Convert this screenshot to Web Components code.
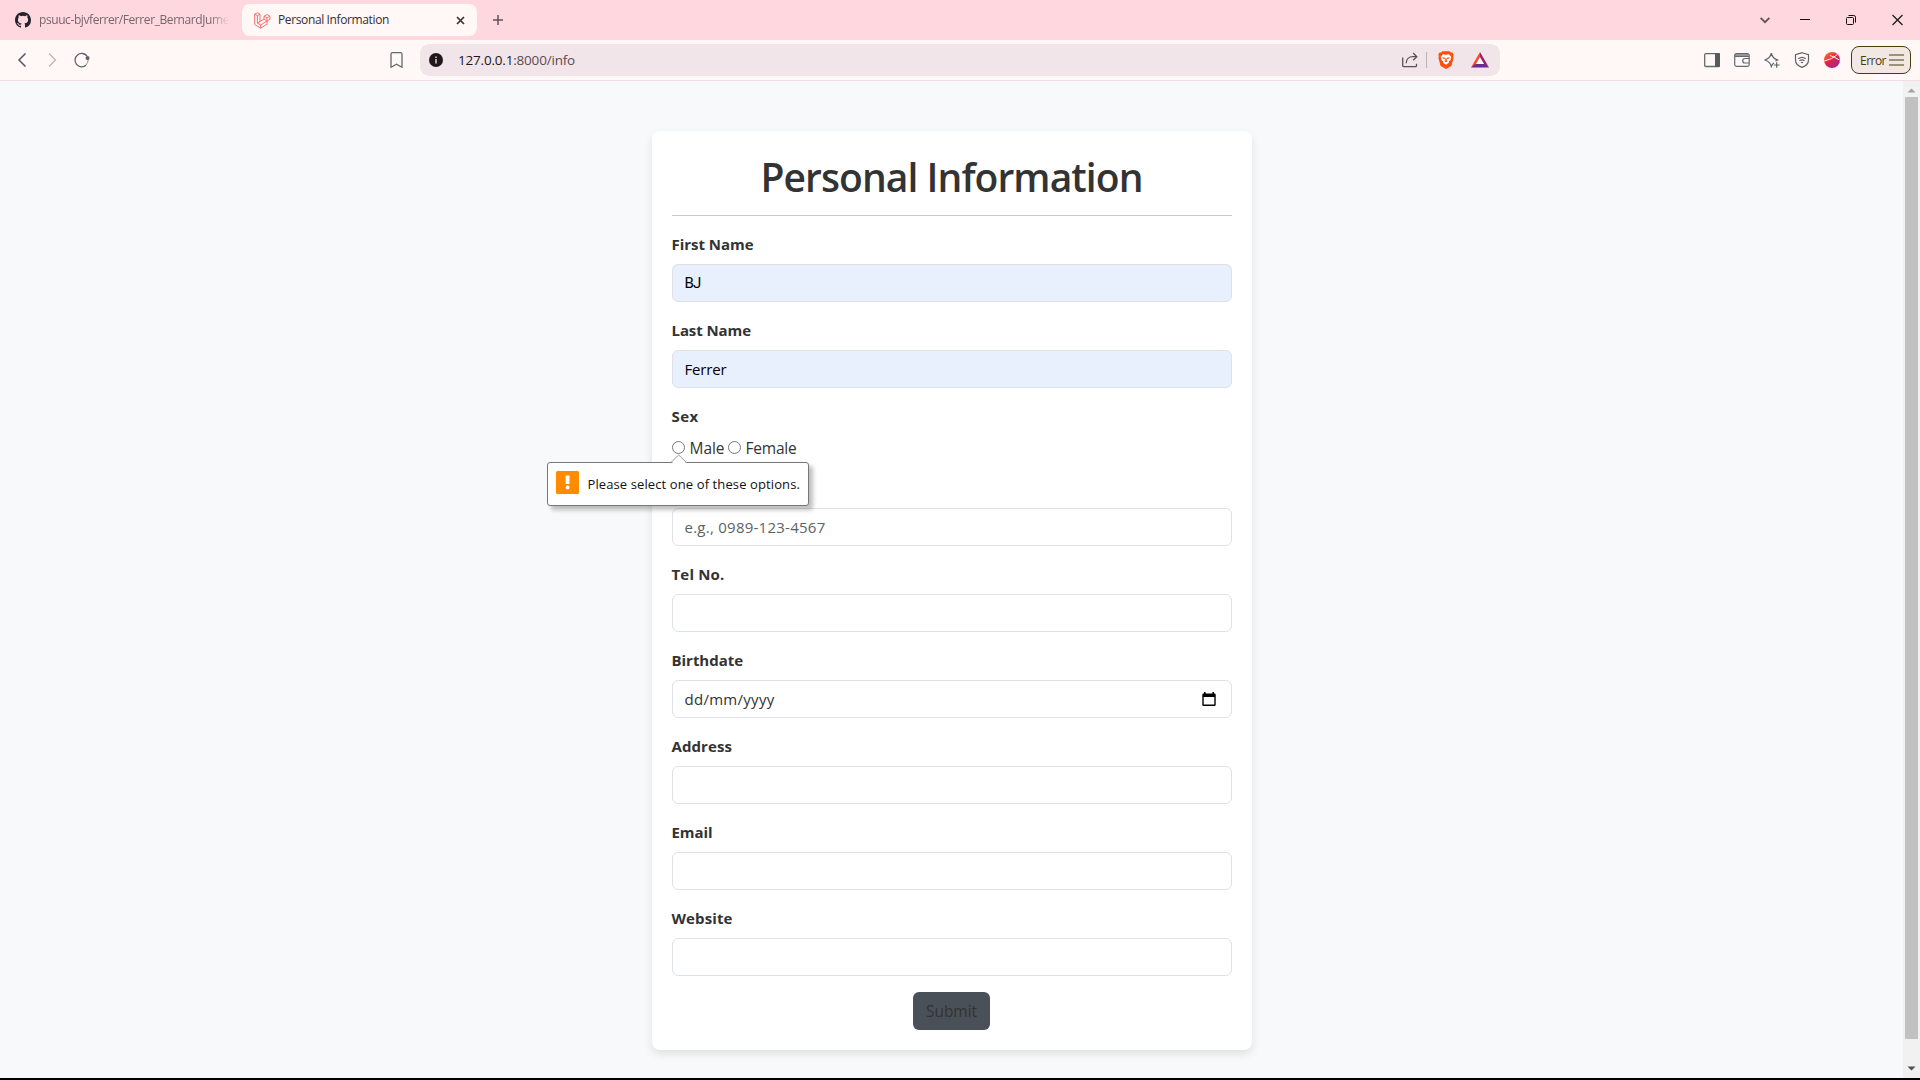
<!DOCTYPE html>
<html lang="en">
<head>
<meta charset="utf-8">
<title>Personal Information</title>
<style>
html,body{margin:0;height:100%;overflow:hidden}
body{font-family:"Open Sans","Noto Sans",sans-serif;color:#333;background:#f8f9fb}
</style>
</head>
<body>
<browser-window></browser-window>
<script>
const define = (name, html, extra) => {
  const t = document.createElement('template');
  t.innerHTML = html;
  customElements.define(name, class extends HTMLElement {
    constructor() {
      super();
      this.attachShadow({mode: 'open'}).append(t.content.cloneNode(true));
    }
    connectedCallback() { if (extra) extra(this, this.shadowRoot); }
  });
};

/* A run of text whose tracking is adjusted so that it spans the width in its "w" attribute. */
const runs = new Set();
define('text-run', `<style>:host{display:inline-block;white-space:nowrap;flex:none}</style><slot></slot>`, el => runs.add(el));

define('tab-strip', `<style>
:host{display:flex;height:40px;background:#ffd7df;align-items:center;box-sizing:border-box}
svg{display:block;flex:none}
.old{display:flex;align-items:center;width:214px;margin-left:15px;gap:8px;height:32px;font-size:12px;color:#75676b}
.clip{overflow:hidden;flex:1;-webkit-mask-image:linear-gradient(90deg,#000 90%,transparent)}
.tab{display:flex;align-items:center;box-sizing:border-box;margin-left:13px;width:235px;height:32px;border-radius:8px;background:#fff8f7;padding:0 12px 0 12px;font-size:12px;color:#342f31}
.tab text-run{margin-left:7px}
text-run{position:relative;top:-.5px}
.x{margin-left:auto}
.plus{margin-left:16px}
.wc{margin-left:auto;display:flex;gap:30px;margin-right:17px}
</style>
<div class="old">
<svg width="16" height="16" viewBox="0 0 16 16"><path fill="#24222a" d="M8 0C3.58 0 0 3.58 0 8c0 3.54 2.29 6.53 5.47 7.59.4.07.55-.17.55-.38 0-.19-.01-.82-.01-1.49-2.01.37-2.53-.49-2.69-.94-.09-.23-.48-.94-.82-1.13-.28-.15-.68-.52-.01-.53.63-.01 1.08.58 1.23.82.72 1.21 1.87.87 2.33.66.07-.52.28-.87.51-1.07-1.78-.2-3.64-.89-3.64-3.95 0-.87.31-1.59.82-2.15-.08-.2-.36-1.02.08-2.12 0 0 .67-.21 2.2.82a7.6 7.6 0 0 1 4 0c1.53-1.04 2.2-.82 2.2-.82.44 1.1.16 1.92.08 2.12.51.56.82 1.27.82 2.15 0 3.07-1.87 3.75-3.65 3.95.29.25.54.73.54 1.48 0 1.07-.01 1.93-.01 2.2 0 .21.15.46.55.38A8.01 8.01 0 0 0 16 8c0-4.42-3.58-8-8-8z"/></svg>
<div class="clip"><text-run w="190">psuuc-bjvferrer/Ferrer_BernardJume</text-run></div>
</div>
<div class="tab">
<svg width="17" height="17" viewBox="0 0 17 17" fill="none" stroke="#f4645f" stroke-width=".9" stroke-linejoin="round"><path d="M.7 2.2 3.3.8 6 2.2v7.2l4-2.3V4.2l3-1.7 2.9 1.7v3.2L13 9v3.2l-6.3 3.9L.7 12.6zM.7 2.2l2.7 1.6L6 2.2M3.4 3.8v7.3l3.3 1.9 6.3-4M6.7 13v3.1M3.4 11.1 6 9.4M10 4.2l3 1.7 2.9-1.7M13 5.9V9l-3-1.9"/></svg>
<text-run w="111">Personal Information</text-run>
<svg class="x" width="9" height="9" viewBox="0 0 9 9" stroke="#38343a" stroke-width="1.7"><path d="M1 1l7 7M8 1 1 8"/></svg>
</div>
<svg class="plus" width="10" height="10" viewBox="0 0 10 10" stroke="#5e5559" stroke-width="1.5"><path d="M5 0v10M0 5h10"/></svg>
<div class="wc">
<svg width="10" height="12" viewBox="0 0 10 12" fill="none" stroke="#5c5459" stroke-width="1.8"><path d="M.6 3.8 5 8.2l4.4-4.4"/></svg>
<svg style="margin-right:6px" width="10" height="12" viewBox="0 0 10 12" stroke="#111" stroke-width="1"><path d="M0 5.5h10"/></svg>
<svg style="margin-right:6px" width="10" height="12" viewBox="0 0 10 12" fill="none" stroke="#111"><rect x=".5" y="3.500" width="7" height="7" rx="1"/><path d="M2.500 1.500h5.300a1.700 1.700 0 0 1 1.700 1.700v5.300"/></svg>
<svg width="11" height="12" viewBox="0 0 11 12" stroke="#111" stroke-width="1.100"><path d="M.5 1l10 10M10.500 1l-10 10"/></svg>
</div>`);

define('address-bar', `<style>
:host{display:flex;align-items:center;height:32px;width:1080px;box-sizing:border-box;border-radius:9px;background:#f2e5ea;padding:0 11px 0 9px;color:#2b1e22;font-size:13.5px}
svg{display:block;flex:none}
text-run{margin-left:15px}
.host{color:#21171b}.rest{color:#594b51}
.end{margin-left:auto;display:flex;align-items:center}
i{width:1px;height:16px;background:#beb1b7;margin:0 11px 0 8px}
</style>
<svg width="14" height="14" viewBox="0 0 14 14"><circle cx="7" cy="7" r="7" fill="#21171b"/><path stroke="#d9ced2" stroke-width="1.5" d="M7 6.1v4.400M7 3.500v1.500"/></svg>
<text-run w="117"><span class="host">127.0.0.1</span><span class="rest">:8000/info</span></text-run>
<div class="end">
<svg width="16" height="16" viewBox="0 0 16 16" fill="none" stroke="#5b5056" stroke-width="1.3"><path d="M.7 5.500v8q0 1.200 1.200 1.200h11.400q1.200 0 1.200-1.200v-1.800M4.200 11.200C4.200 7 7 4.700 11 4.700h3.500M11.200 1l3.600 3.700-3.600 3.600"/></svg>
<i></i>
<svg width="16" height="18" viewBox="0 0 16 18"><path fill="#fb4f0b" d="M4.300.2h7.400l1.200 1.400 1.600-.1 1.200 2.200-.6 1.600.5 1.500-1.900 7.100q-.3 1-1.200 1.600L8 18l-4.500-2.500q-.9-.6-1.200-1.600L.4 6.800l.5-1.500-.6-1.600L1.500 1.500l1.600.1z"/><path fill="#fff" d="M5 3.200 8 3.700l3-.5 2.300 2.900-.6 1.500.2 1-2.300 2.200.3.900L8 13.700l-2.900-2 .3-.9L3.100 8.600l.2-1-.6-1.500z"/><path fill="#fb4f0b" d="M4.500 6.200 7 6.800 6.800 8 4.800 7.400zM11.500 6.200 9 6.800 9.200 8l2-.6zM7.500 7h1l.3 2.500.9.600L8 11.200l-1.700-1.100.9-.6z"/></svg>
<svg style="margin-left:17px" width="18" height="16" viewBox="0 0 18 16"><path fill="#fff" d="M9 5 13.500 12.500h-9z"/><path fill="#ff4724" d="M9 0v5L4.600 12.400 0 15.500z"/><path fill="#9e1f63" d="M9 0l9 15.500-4.600-3.100L9 5z"/><path fill="#662d91" d="M0 15.500l4.600-3.600h8.800l4.600 3.600z"/></svg>
</div>`);

define('nav-bar', `<style>
:host{display:flex;align-items:center;height:41px;box-sizing:border-box;border-bottom:1px solid #f4dce0;background:#fff8f7;padding:0 9px 0 17px}
svg{display:block;flex:none}
address-bar{margin-left:17px}
.ext{margin-left:auto;display:flex;align-items:center;gap:14px}
.menu{display:flex;align-items:center;justify-content:space-between;box-sizing:border-box;width:60px;height:28px;border:1.5px solid #4b3a0e;border-radius:8px;background:#f1e8e3;color:#4b3a0e;font-size:12px;padding:0 5px 0 8px;margin-left:-3px}
</style>
<svg width="10" height="14" viewBox="0 0 10 14" fill="none" stroke="#53595e" stroke-width="1.5"><path d="M8.500.500 2 7l6.500 6.500"/></svg>
<svg style="margin-left:21px" width="9" height="14" viewBox="0 0 9 14" fill="none" stroke="#b9b5b7" stroke-width="1.300"><path d="M1 .5 7.500 7 1 13.500"/></svg>
<svg style="margin-left:17px" width="16" height="16" viewBox="0 0 16 16" fill="none" stroke="#5d6267" stroke-width="1.300"><path d="M13 4A6.700 6.700 0 1 0 12 13.300"/><circle cx="13.500" cy="6" r="2" fill="#5d6267" stroke="none"/><path d="M14.300 7q0 3.800-2.700 6.600" stroke-width=".7"/></svg>
<svg style="margin-left:300px" width="13" height="16" viewBox="0 0 13 16" fill="none" stroke="#65696e" stroke-width="1.300"><path d="M2.500.700h8q1.500 0 1.500 1.500v13l-5.500-3-5.500 3v-13Q1 .700 2.500.700z"/></svg>
<address-bar></address-bar>
<div class="ext">
<svg width="16" height="16" viewBox="0 0 16 16"><rect x=".7" y="1.700" width="14.600" height="12.800" rx="1" fill="none" stroke="#666a6f" stroke-width="1.300"/><path fill="#555a60" d="M11 1h4q1 0 1 1v12q0 1-1 1h-4z"/></svg>
<svg width="16" height="16" viewBox="0 0 16 16" fill="none" stroke="#65696e" stroke-width="1.200"><path fill="#a5a4a6" stroke="none" d="M1 2h13.500v2.500H1z"/><path d="M15.200 6V3.500q0-1.800-1.800-1.800H2.500Q.7 1.700.7 3.500v9q0 1.800 1.800 1.800h10.900q1.800 0 1.800-1.800v-7q0-1.200-1.500-1.200H1M15 6.500h-4a2.200 2.200 0 0 0 0 4.500h4"/></svg>
<svg width="16" height="16" viewBox="0 0 16 16" fill="none" stroke="#5d6267" stroke-width="1.200"><path d="M10 11q-1.800 1.200-2.700 3.500-.9-4.500-6.300-6.500 5.300-1.800 6.300-6.800 1 5.100 6.300 6.800L11.500 9M12.700 10.200v5.600M10 13h5.600"/></svg>
<svg width="16" height="16" viewBox="0 0 16 16" fill="none" stroke="#5d6267" stroke-width="1.200"><path d="M8 .7l6.500 2v5.200q0 5-6.500 7.500-6.500-2.500-6.500-7.500V2.700zM4.300 6.700Q8 3.900 11.700 6.700M5.500 8.800q2.500-1.900 5 0M7 10.700q1-.8 2 0"/></svg>
<svg width="16" height="16" viewBox="0 0 16 16"><defs><linearGradient id="g" x1="0" y1="0" x2=".8" y2="1"><stop offset="0" stop-color="#ff8a2f"/><stop offset=".5" stop-color="#e42344"/><stop offset="1" stop-color="#9b2897"/></linearGradient></defs><circle cx="8" cy="8" r="8" fill="url(#g)"/><path d="M.3 9Q8 7.500 13.500 2.500M6 3.500q4 1.500 9.500 4.500" fill="none" stroke="#fff4ee" stroke-width="1"/></svg>
<div class="menu"><text-run w="26">Error</text-run><svg width="16" height="12" viewBox="0 0 16 12" stroke="#4b3a0e" stroke-width="1.200"><path d="M0 1h15M0 6h15M0 11h15"/></svg></div>
</div>`);

define('form-field', `<style>
:host{display:flex;flex-direction:column;gap:8px;margin-bottom:16px}
.label{height:24px;line-height:24px;font-weight:700;font-size:15px;color:#333}
.box{display:flex;align-items:center;justify-content:space-between;height:38px;box-sizing:border-box;border:1px solid #dee2e6;border-radius:6px;background:#fff;padding:0 15px 0 12px;font-size:15px;line-height:24px}
:host([filled]) .box{background:#e8f0fe;color:#000}
</style><div class="label"><slot name="label"></slot></div><div class="box"><slot></slot></div>`);

define('radio-option', `<style>
:host{display:flex;align-items:center;gap:5px;font-size:15.5px;line-height:24px}
i{width:13px;height:13px;box-sizing:border-box;border:1px solid #767676;border-radius:50%;background:#fff;flex:none;margin-top:-1px}
</style><i></i><slot></slot>`);

define('validation-bubble', `<style>
:host{position:absolute;left:-125px;top:26px;z-index:2;display:flex;align-items:center;gap:9px;box-sizing:border-box;width:262px;height:44px;border:1px solid #777;border-radius:3px;background:#fff;box-shadow:4px 4px 4px rgba(0,0,0,.25);padding:0 8px;color:#111;font-size:13px}
.arrow{position:absolute;left:122px;top:-9px}
.icon{margin-top:-3px;flex:none}
svg{display:block}
</style>
<svg class="arrow" width="18" height="10" viewBox="0 0 18 10"><path fill="#fff" d="M1 10 9 1.500 17 10z"/><path fill="none" stroke="#999" d="M.5 8.900 8.700 1l8.200 7.900"/></svg>
<svg class="icon" width="23" height="23" viewBox="0 0 23 23"><rect width="23" height="23" rx="1.500" fill="#ff8c00"/><path fill="#fff" d="M9.700 4.500h3.800v8.500H9.700z"/><circle cx="11.600" cy="16.400" r="1.900" fill="#fff"/></svg>
<text-run w="212.500">Please select one of these options.</text-run>`);

define('info-card', `<style>
:host{display:block;box-sizing:border-box;width:600px;height:919px;margin:50px auto 0;padding:20px;border-radius:8px;background:#fff;box-shadow:0 4px 8px rgba(0,0,0,.1)}
h1{margin:0;height:48px;line-height:51px;text-align:center;font-size:39px;font-weight:550;color:#333}
hr{margin:16px 0;border:0;height:1px;background:#c9c9c9}
.sex{margin-bottom:16px}
.label{height:24px;line-height:24px;font-weight:700;font-size:15px;margin-bottom:8px}
.radios{display:flex;height:24px;gap:3px;position:relative}
.initials{font-family:Roboto,"Open Sans",sans-serif}
.ph{color:#5d6267}
.submit{display:flex;align-items:center;justify-content:center;margin:0 auto;width:77px;height:38px;border-radius:6px;background:#495057;color:#333;font-size:15.5px}
.sex + form-field{margin-top:0}
</style>
<h1><text-run w="382">Personal Information</text-run></h1>
<hr>
<form-field filled><text-run slot="label" w="82">First Name</text-run><text-run class="initials" w="16">BJ</text-run></form-field>
<form-field filled><text-run slot="label" w="79.500">Last Name</text-run><text-run w="42">Ferrer</text-run></form-field>
<div class="sex"><div class="label"><text-run w="27">Sex</text-run></div>
<div class="radios"><radio-option><text-run w="35">Male</text-run></radio-option><radio-option><text-run w="51">Female</text-run></radio-option><validation-bubble></validation-bubble></div></div>
<form-field><text-run class="ph" w="141">e.g., 0989-123-4567</text-run></form-field>
<form-field><text-run slot="label" w="53">Tel No.</text-run></form-field>
<form-field><text-run slot="label" w="71.500">Birthdate</text-run><text-run w="90">dd/mm/yyyy</text-run><svg width="14" height="16" viewBox="0 0 14 16"><path fill="#000" d="M2 1h1.600v1.500h6.800V1H12v1.500h.5q1.200 0 1.200 1.200v10.100q0 1.200-1.200 1.200h-11Q.3 15 .3 13.800V3.700q0-1.200 1.200-1.200H2zM1.700 6v7.600h10.600V6z"/></svg></form-field>
<form-field><text-run slot="label" w="60.500">Address</text-run></form-field>
<form-field><text-run slot="label" w="41">Email</text-run></form-field>
<form-field><text-run slot="label" w="61">Website</text-run></form-field>
<div class="submit"><text-run w="51">Submit</text-run></div>`);

define('scroll-bar', `<style>
:host{display:flex;flex-direction:column;align-items:center;justify-content:space-between;width:17px;box-sizing:border-box;background:#f1f1f1;padding:7px 0}
svg{display:block}
i{width:13px;height:942px;background:#c1c1c1;margin-bottom:20px;margin-top:-3px}
</style><svg width="9" height="5" viewBox="0 0 9 5"><path fill="#a3a3a3" d="M.5 4.500 4.500.500l4 4z"/></svg><i></i><svg width="9" height="5" viewBox="0 0 9 5"><path fill="#505050" d="M.5.500h8l-4 4z"/></svg>`);

define('browser-window', `<style>
:host{display:flex;flex-direction:column;width:1920px;height:1080px;box-sizing:border-box;border-bottom:2px solid #000;background:#f8f9fb;overflow:hidden}
.view{flex:1;display:flex;min-height:0}
main{flex:1}
main::before{content:"";display:table}
</style>
<tab-strip></tab-strip><nav-bar></nav-bar>
<div class="view"><main><info-card></info-card></main><scroll-bar></scroll-bar></div>`);

for (const el of runs) {
  const w = el.getBoundingClientRect().width;
  el.style.letterSpacing = ((+el.getAttribute('w') - w) / el.textContent.length).toFixed(3) + 'px';
}
</script>
</body>
</html>
